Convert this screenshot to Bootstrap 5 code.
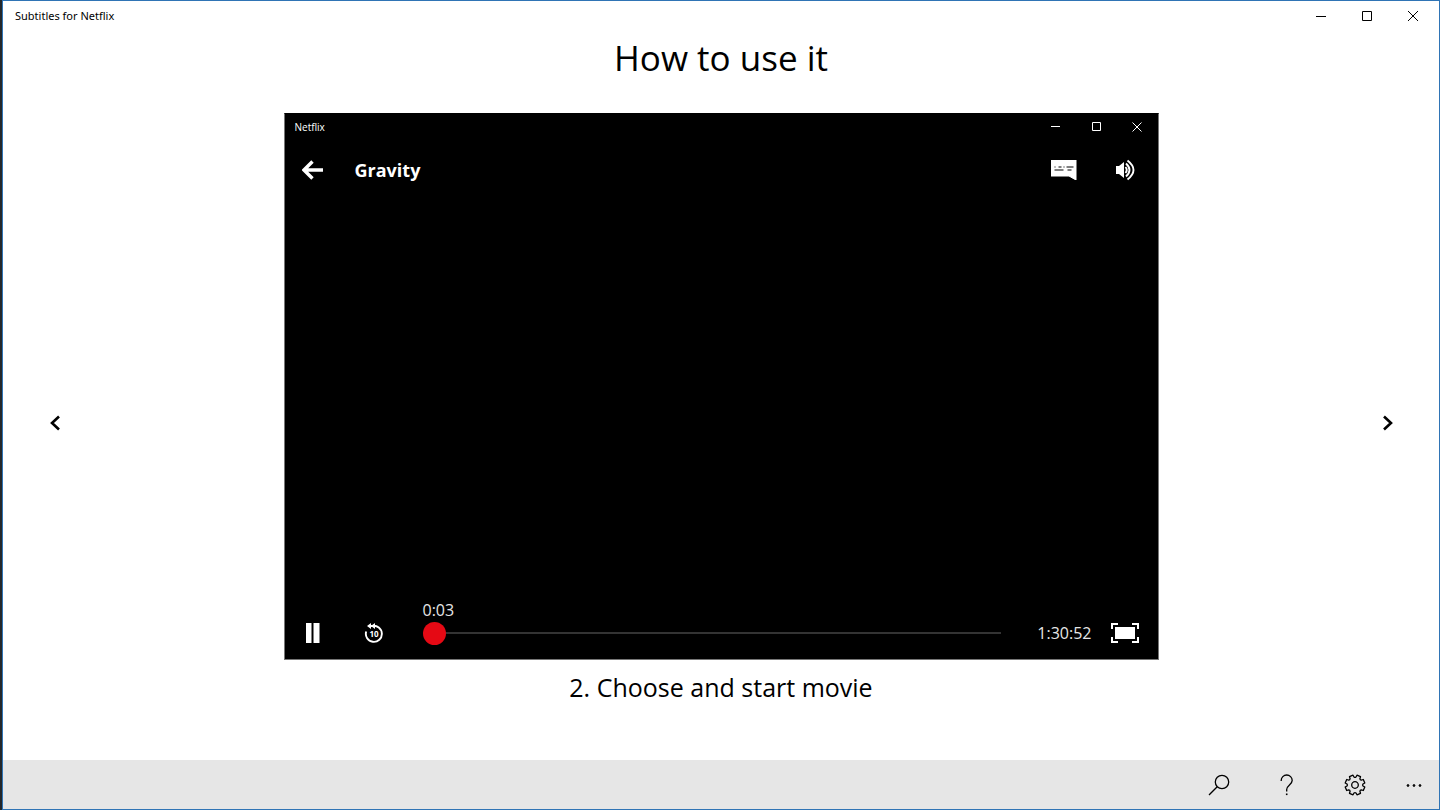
<!DOCTYPE html>
<html lang="en">
<head>
<meta charset="utf-8">
<meta name="viewport" content="width=device-width, initial-scale=1">
<title>Subtitles for Netflix</title>
<link href="https://cdn.jsdelivr.net/npm/bootstrap@5.3.0/dist/css/bootstrap.min.css" rel="stylesheet">
<style>
body { font-family: "Open Sans", "Noto Sans", sans-serif; color: #000; background: #fff; border-left: 2px solid #23272b; }
.app-window { border: 1px solid #2f74b5; }
.icon-btn { display: flex; align-items: center; justify-content: center; padding: 0; border: 0; background: none; color: inherit; }
.icon-btn:hover { background: rgba(128, 128, 128, .2); }
svg { display: block; fill: none; stroke: currentColor; }
.app-title { font-family: "Noto Sans", sans-serif; font-size: 11px; line-height: 30px; padding-left: 12px; }
.caption-btn { width: 46px; height: 30px; }
.page-title { font-size: 35px; line-height: 54px; }
.flip-btn { width: 40px; height: 40px; }
.slide { max-width: 875px; padding-top: 28px; }
.player { aspect-ratio: 8 / 5; background: #000; color: #fff; border: 1px solid #777; border-top-color: #000; }
.player-title { font-size: 10px; line-height: 26px; padding-left: 10px; }
.player-caption-btn { width: 41px; height: 26px; }
.player-row { height: 60px; }
.player-btn { width: 56px; height: 52px; }
.seek-btn { width: 66px; height: 52px; }
.movie-name { font-size: 18px; line-height: 28px; padding-left: 14px; }
.timeline { padding-left: 16px; padding-right: 36px; padding-bottom: 14px; }
.clock { font-size: 16px; line-height: 20px; color: #e6e6e6; }
.seek { appearance: none; -webkit-appearance: none; display: block; width: 100%; height: 23px; margin: 2px 0 0; background: linear-gradient(#333, #333) center / 100% 2px no-repeat; }
.seek::-webkit-slider-thumb { -webkit-appearance: none; width: 23px; height: 23px; border: 0; border-radius: 50%; background: #e50914; }
.seek::-moz-range-thumb { width: 23px; height: 23px; border: 0; border-radius: 50%; background: #e50914; }
.step-text { font-size: 25px; line-height: 36px; padding-top: 9px; }
.command-bar { background: #e6e6e6; }
.command-btn { width: 68px; height: 49px; }
.more-btn { width: 50px; height: 49px; }
</style>
</head>
<body>
<div class="app-window d-flex flex-column min-vh-100">
  <header class="d-flex justify-content-between">
    <div class="app-title">Subtitles for Netflix</div>
    <div class="d-flex pe-1">
      <button class="icon-btn caption-btn" type="button" aria-label="Minimize"><svg width="12" height="12"><path d="M2 6.500h10"/></svg></button>
      <button class="icon-btn caption-btn" type="button" aria-label="Maximize"><svg width="12" height="12"><path d="M2.500 1.500h9v9h-9z"/></svg></button>
      <button class="icon-btn caption-btn" type="button" aria-label="Close"><svg width="12" height="12"><path d="M2 1l10 10M12 1L2 11"/></svg></button>
    </div>
  </header>
  <h1 class="page-title fw-normal text-center mb-0">How to use it</h1>
  <main class="d-flex flex-grow-1 align-items-center justify-content-between px-4">
    <button class="icon-btn flip-btn ms-2" type="button" aria-label="Previous step"><svg width="12" height="16" stroke-width="2.600"><path d="M10 1.500L3 8l7 6.500"/></svg></button>
    <figure class="slide flex-grow-1 align-self-start mb-0">
      <div class="player d-flex flex-column">
        <div class="d-flex justify-content-between">
          <div class="player-title">Netflix</div>
          <div class="d-flex">
            <button class="icon-btn player-caption-btn" type="button" aria-label="Minimize player"><svg width="10" height="10"><path d="M1 4.500h9"/></svg></button>
            <button class="icon-btn player-caption-btn" type="button" aria-label="Maximize player"><svg width="10" height="10"><path d="M1.500.500h8v8h-8z"/></svg></button>
            <button class="icon-btn player-caption-btn" type="button" aria-label="Close player"><svg width="10" height="10"><path d="M.5.500l9 9M9.500.500l-9 9"/></svg></button>
          </div>
        </div>
        <div class="player-row d-flex align-items-center">
          <button class="icon-btn player-btn" type="button" aria-label="Back"><svg width="22" height="20" stroke-width="3.400"><path d="M21 10H2M10.500 1.500L2 10l8.500 8.500"/></svg></button>
          <div class="movie-name fw-bold me-auto">Gravity</div>
          <button class="icon-btn player-btn" type="button" aria-label="Subtitles"><svg width="26" height="20" stroke="none"><path fill="#fff" d="M0 0h25v20l-7-4H0z"/><path fill="#000" d="M3 6h2v2H3zM7 6h4v2H7zM12 6h2v2h-2zM15 6h8v2h-8zM3 9h10v2H3zM16 9h5v2h-5z"/></svg></button>
          <button class="icon-btn seek-btn" type="button" aria-label="Volume"><svg width="20" height="22" stroke-width="1.900"><path fill="currentColor" stroke="none" d="M1 7h3l5-4v16l-5-4H1z"/><path d="M10.500 8q2.500 3 0 6M11 4.500q7 6.500 0 13M12.500 1.500q12 9.500 0 19"/></svg></button>
        </div>
        <div class="d-flex align-items-end mt-auto">
          <button class="icon-btn player-btn" type="button" aria-label="Pause"><svg width="14" height="20" stroke="none"><path fill="currentColor" d="M0 0h5v20H0zM8 0h5v20H8z"/></svg></button>
          <button class="icon-btn seek-btn" type="button" aria-label="Back 10 seconds"><svg width="20" height="20" stroke-width="1.900"><path d="M2.200 8.500a8 8 0 1 0 6-5.500H5"/><path fill="currentColor" stroke="none" d="M3 3l4-3v6zM7 3l4-3v6z"/><text x="10" y="14" text-anchor="middle" font-size="8" font-weight="700" fill="currentColor" stroke="none">10</text></svg></button>
          <div class="timeline flex-grow-1">
            <label class="clock d-block" for="seek">0:03</label>
            <input class="seek" id="seek" type="range" min="0" max="5452" value="3">
          </div>
          <div class="clock pb-3">1:30:52</div>
          <button class="icon-btn seek-btn" type="button" aria-label="Full screen"><svg width="28" height="20" stroke-width="2"><path d="M7 1H1v5M21 1h6v5M27 14v5h-6M7 19H1v-5"/><path fill="currentColor" stroke="none" d="M4 4h20v12H4z"/></svg></button>
        </div>
      </div>
      <figcaption class="step-text text-center">2. Choose and start movie</figcaption>
    </figure>
    <button class="icon-btn flip-btn me-2" type="button" aria-label="Next step"><svg width="12" height="16" stroke-width="2.600"><path d="M3 1.500L10 8l-7 6.500"/></svg></button>
  </main>
  <footer class="command-bar d-flex justify-content-end">
    <button class="icon-btn command-btn" type="button" aria-label="Search"><svg width="22" height="22" stroke-width="1.300"><circle cx="14" cy="8" r="6.700"/><path d="M9.200 12.800L1 21"/></svg></button>
    <button class="icon-btn command-btn" type="button" aria-label="Help"><svg width="14" height="22" stroke-width="1.300"><path d="M1.200 7V6.500a5.500 5.500 0 0 1 11 0c0 4-5.500 5-5.500 9v2"/><path stroke-width="1.600" d="M6.700 19.500v1.600"/></svg></button>
    <button class="icon-btn command-btn" type="button" aria-label="Settings"><svg width="22" height="22" viewBox="-11 -11 22 22" stroke-width="1.300" stroke-linejoin="round"><circle r="3.300"/><path d="M2-9.800L5.500-8.300L4.900-6.300Q5-5 6.300-4.900L8.300-5.500L9.800-2L8-1Q7.200 0 8 1L9.800 2L8.300 5.500L6.300 4.900Q5 5 4.900 6.300L5.500 8.300L2 9.800L1 8Q0 7.200-1 8L-2 9.800L-5.500 8.300L-4.900 6.300Q-5 5-6.300 4.900L-8.300 5.500L-9.800 2L-8 1Q-7.200 0-8-1L-9.800-2L-8.300-5.500L-6.300-4.900Q-5-5-4.900-6.300L-5.500-8.300L-2-9.800L-1-8Q0-7.200 1-8z"/></svg></button>
    <button class="icon-btn more-btn" type="button" aria-label="More"><svg width="16" height="4" stroke="none"><g fill="currentColor"><circle cx="2" cy="2.500" r=".9"/><circle cx="8" cy="2.500" r=".9"/><circle cx="14" cy="2.500" r=".9"/></g></svg></button>
  </footer>
</div>
<script src="https://cdn.jsdelivr.net/npm/bootstrap@5.3.0/dist/js/bootstrap.bundle.min.js"></script>
</body>
</html>
